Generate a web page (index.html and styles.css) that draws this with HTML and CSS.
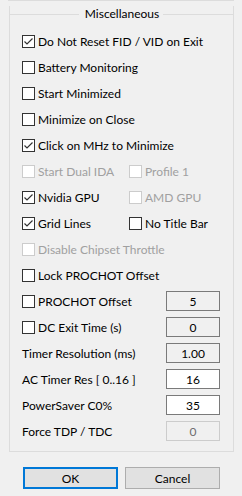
FILE: index.html
```html
<!DOCTYPE html>
<html lang="en">
<head>
<meta charset="UTF-8">
<meta name="viewport" content="width=device-width, initial-scale=1.0">
<title>Options</title>
<link rel="stylesheet" href="styles.css">
</head>
<body>

<div class="prev-box"></div>

<div class="group">
    <div class="group-title"><span>Miscellaneous</span></div>

    <div class="row">
        <label class="check on"><svg viewBox="0 0 13 13"><rect x="0.5" y="0.5" width="12" height="12"/><polyline points="2.5,6.5 5,9 10.5,3.5"/></svg>Do Not Reset FID / VID on Exit</label>
    </div>
    <div class="row">
        <label class="check"><svg viewBox="0 0 13 13"><rect x="0.5" y="0.5" width="12" height="12"/></svg>Battery Monitoring</label>
    </div>
    <div class="row">
        <label class="check"><svg viewBox="0 0 13 13"><rect x="0.5" y="0.5" width="12" height="12"/></svg>Start Minimized</label>
    </div>
    <div class="row">
        <label class="check"><svg viewBox="0 0 13 13"><rect x="0.5" y="0.5" width="12" height="12"/></svg>Minimize on Close</label>
    </div>
    <div class="row">
        <label class="check on"><svg viewBox="0 0 13 13"><rect x="0.5" y="0.5" width="12" height="12"/><polyline points="2.5,6.5 5,9 10.5,3.5"/></svg>Click on MHz to Minimize</label>
    </div>
    <div class="row">
        <label class="check col disabled"><svg viewBox="0 0 13 13"><rect x="0.5" y="0.5" width="12" height="12"/></svg>Start Dual IDA</label>
        <label class="check disabled"><svg viewBox="0 0 13 13"><rect x="0.5" y="0.5" width="12" height="12"/></svg>Profile 1</label>
    </div>
    <div class="row">
        <label class="check col on"><svg viewBox="0 0 13 13"><rect x="0.5" y="0.5" width="12" height="12"/><polyline points="2.5,6.5 5,9 10.5,3.5"/></svg>Nvidia GPU</label>
        <label class="check disabled"><svg viewBox="0 0 13 13"><rect x="0.5" y="0.5" width="12" height="12"/></svg>AMD GPU</label>
    </div>
    <div class="row">
        <label class="check col on"><svg viewBox="0 0 13 13"><rect x="0.5" y="0.5" width="12" height="12"/><polyline points="2.5,6.5 5,9 10.5,3.5"/></svg>Grid Lines</label>
        <label class="check"><svg viewBox="0 0 13 13"><rect x="0.5" y="0.5" width="12" height="12"/></svg>No Title Bar</label>
    </div>
    <div class="row">
        <label class="check disabled"><svg viewBox="0 0 13 13"><rect x="0.5" y="0.5" width="12" height="12"/></svg>Disable Chipset Throttle</label>
    </div>
    <div class="row">
        <label class="check"><svg viewBox="0 0 13 13"><rect x="0.5" y="0.5" width="12" height="12"/></svg>Lock PROCHOT Offset</label>
    </div>
    <div class="row">
        <label class="check"><svg viewBox="0 0 13 13"><rect x="0.5" y="0.5" width="12" height="12"/></svg>PROCHOT Offset</label>
        <input class="field readonly" type="text" value="5" readonly>
    </div>
    <div class="row">
        <label class="check"><svg viewBox="0 0 13 13"><rect x="0.5" y="0.5" width="12" height="12"/></svg>DC Exit Time (s)</label>
        <input class="field readonly" type="text" value="0" readonly>
    </div>
    <div class="row">
        <span class="text">Timer Resolution (ms)</span>
        <input class="field readonly" type="text" value="1.00" readonly>
    </div>
    <div class="row">
        <span class="text">AC Timer Res [ 0..16 ]</span>
        <input class="field" type="text" value="16">
    </div>
    <div class="row">
        <span class="text">PowerSaver C0%</span>
        <input class="field" type="text" value="35">
    </div>
    <div class="row">
        <span class="text">Force TDP / TDC</span>
        <input class="field" type="text" value="0" disabled>
    </div>
</div>

<div class="buttons">
    <button class="default">OK</button>
    <button>Cancel</button>
</div>

</body>
</html>
```

FILE: styles.css
```css
body {
    margin: 0;
    padding: 0;
    background-color: #f0f0f0;
    font-family: Lato, "Noto Sans", sans-serif;
    font-size: 12px;
    color: #000;
}
.prev-box {
    width: 224px;
    height: 0;
    margin-left: 8px;
    border: 1px solid #dcdcdc;
    border-top: none;
}
.group {
    width: 225px;
    margin: 5px 0 0 9px;
    padding: 0 13px 7px 12px;
    box-sizing: border-box;
    border: 1px solid #dcdcdc;
    border-top: none;
}
.group-title {
    display: flex;
    align-items: center;
    height: 16px;
    margin: 0 -13px 6px -13px;
}
.group-title::before,
.group-title::after {
    content: "";
    flex: 1;
    border-top: 1px solid #dcdcdc;
}
.group-title span {
    padding: 0 4px 0 6px;
    line-height: 16px;
}
.row {
    display: flex;
    align-items: center;
    justify-content: space-between;
    height: 26px;
}
.check {
    display: flex;
    align-items: center;
    gap: 3px;
    white-space: nowrap;
}
.check.col {
    width: 107px;
}
.row .check:last-child:not(:first-child) {
    margin-right: auto;
}
.check svg {
    width: 13px;
    height: 13px;
    flex: none;
}
.check rect {
    fill: #fff;
    stroke: #333;
    stroke-width: 1;
}
.check polyline {
    fill: none;
    stroke: #333;
    stroke-width: 1.2;
}
.check.disabled {
    color: #a0a0a0;
}
.check.disabled rect {
    stroke: #cccccc;
}
.field {
    width: 54px;
    height: 20px;
    box-sizing: border-box;
    border: 1px solid #7a7a7a;
    background: #fff;
    font-family: inherit;
    font-size: 12px;
    color: #000;
    text-align: center;
    padding: 0;
    outline: none;
}
.field.readonly {
    background: #f0f0f0;
}
.field:disabled {
    border-color: #cccccc;
    background: #f0f0f0;
    color: #6d6d6d;
}
.buttons {
    display: flex;
    gap: 7px;
    margin: 15px 0 0 23px;
}
.buttons button {
    width: 95px;
    height: 22px;
    box-sizing: border-box;
    background: #e1e1e1;
    border: 1px solid #adadad;
    font-family: inherit;
    font-size: 12px;
    color: #000;
    padding: 0;
}
.buttons button.default {
    border: 2px solid #0078d7;
}
```
